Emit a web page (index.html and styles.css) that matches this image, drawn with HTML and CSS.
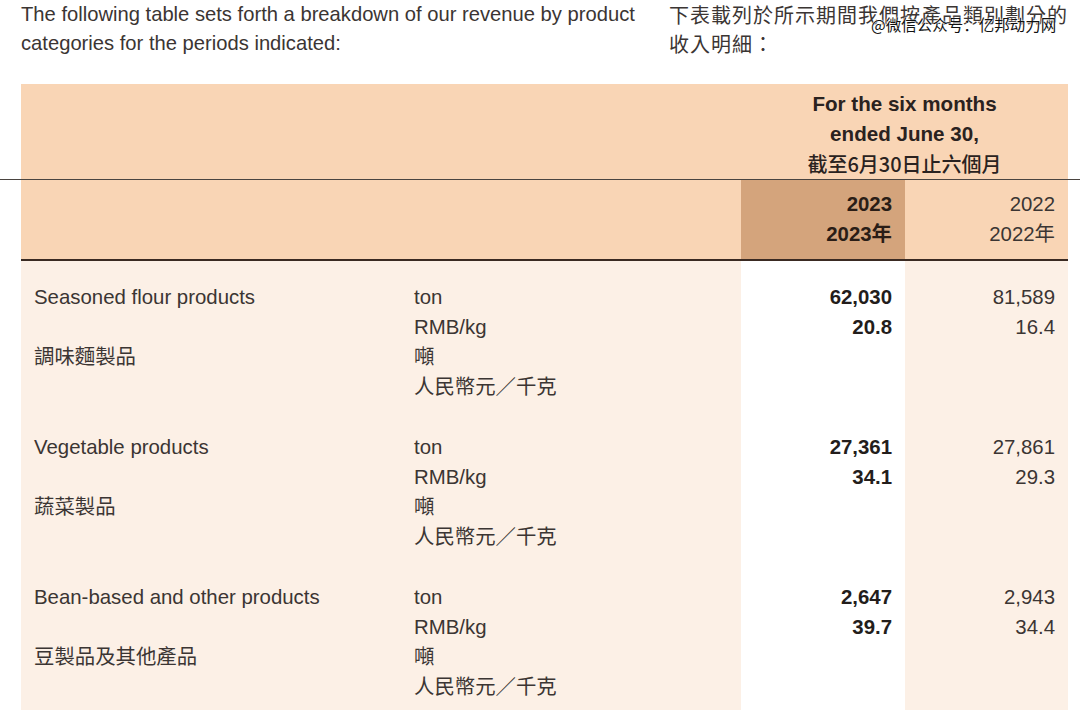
FILE: index.html
```html
<!DOCTYPE html>
<html>
<head>
<meta charset="utf-8">
<link rel="stylesheet" href="styles.css">
</head>
<body>
<div class="page">
  <div class="intro">
    <p class="intro-en">The following table sets forth a breakdown of our revenue by product categories for the periods indicated:</p>
    <p class="intro-zh">下表載列於所示期間我們按產品類別劃分的收入明細：</p>
  </div>
  <div class="table">
    <div class="head1">
      <div class="spacer"></div>
      <div class="period">For the six months<br>ended June 30,<br><span class="zh">截至6月30日止六個月</span></div>
    </div>
    <div class="rule-wide"></div>
    <div class="head2">
      <div></div>
      <div></div>
      <div class="yr cur"><b>2023</b><br><b>2023年</b></div>
      <div class="yr">2022<br>2022年</div>
    </div>
    <div class="body">
      <div class="grp">
        <div class="lbl">Seasoned flour products<br>&nbsp;<br>調味麵製品</div>
        <div class="unit">ton<br>RMB/kg<br>噸<br>人民幣元／千克</div>
        <div class="v cur">62,030<br>20.8</div>
        <div class="v">81,589<br>16.4</div>
      </div>
      <div class="grp">
        <div class="lbl">Vegetable products<br>&nbsp;<br>蔬菜製品</div>
        <div class="unit">ton<br>RMB/kg<br>噸<br>人民幣元／千克</div>
        <div class="v cur">27,361<br>34.1</div>
        <div class="v">27,861<br>29.3</div>
      </div>
      <div class="grp last">
        <div class="lbl">Bean-based and other products<br>&nbsp;<br>豆製品及其他產品</div>
        <div class="unit">ton<br>RMB/kg<br>噸<br>人民幣元／千克</div>
        <div class="v cur">2,647<br>39.7</div>
        <div class="v">2,943<br>34.4</div>
      </div>
    </div>
  </div>
  <div class="watermark">@微信公众号：亿邦动力网</div>
</div>
</body>
</html>
```
FILE: styles.css
```css
html, body {
  margin: 0;
  padding: 0;
  background: #ffffff;
}
body {
  font-family: "Liberation Sans", Arial, "Noto Sans CJK TC", sans-serif;
  font-size: 20.4px;
  color: #3b3533;
}
.page {
  position: relative;
  width: 1080px;
  height: 718px;
  padding: 0 12px 0 21px;
  box-sizing: border-box;
  overflow: hidden;
}
.intro {
  display: flex;
  line-height: 29px;
  height: 58px;
  margin-bottom: 26px;
}
.intro p { margin: 0; }
.intro-en {
  width: 640px;
  flex: none;
  font-size: 20.2px;
}
.intro-zh {
  margin-left: 8px !important;
  width: 405px;
  flex: none;
  letter-spacing: 1px;
  font-family: "Noto Sans CJK TC", sans-serif;
  font-size: 20px;
}
.table {
  width: 1047px;
}
.head1 {
  display: grid;
  grid-template-columns: 720px 327px;
  background: #f9d5b5;
  height: 95px;
  box-sizing: border-box;
  padding-top: 5px;
}
.period {
  text-align: center;
  font-weight: bold;
  line-height: 30px;
  color: #2a2220;
  font-size: 20.6px;
}
.period .zh {
  font-family: "Noto Sans CJK TC", sans-serif;
  font-size: 20px;
  font-weight: 500;
}
.rule-wide {
  height: 1px;
  background: #4a4440;
  margin: 0 -12px 0 -21px;
}
.head2 {
  display: grid;
  grid-template-columns: 393px 327px 164px 163px;
  background: #f9d5b5;
  height: 79px;
  border-bottom: 2px solid #3a2a22;
}
.yr {
  text-align: right;
  padding: 9px 13px 0 0;
  line-height: 30px;
}
.yr.cur {
  background: #d4a47c;
  color: #2a1d16;
}
.head2 .yr b { font-weight: bold; }
.body {
  background: #fcf0e6;
}
.grp {
  display: grid;
  grid-template-columns: 393px 327px 164px 163px;
  line-height: 30px;
}
.grp > div {
  padding-top: 21px;
  padding-bottom: 9px;
}
.grp.last > div {
  padding-bottom: 8px;
}
.lbl {
  padding-left: 13px;
}
.v {
  text-align: right;
  padding-right: 13px;
}
.v.cur {
  background: #ffffff;
  font-weight: bold;
  color: #231d1b;
}
.watermark {
  position: absolute;
  left: 871px;
  top: 13px;
  font-family: "Noto Sans CJK SC", sans-serif;
  font-size: 15.5px;
  line-height: 22px;
  color: #111;
  text-shadow: 0 0 2px #fff, 0 0 2px #fff, 0 0 1px #fff;
}
```
